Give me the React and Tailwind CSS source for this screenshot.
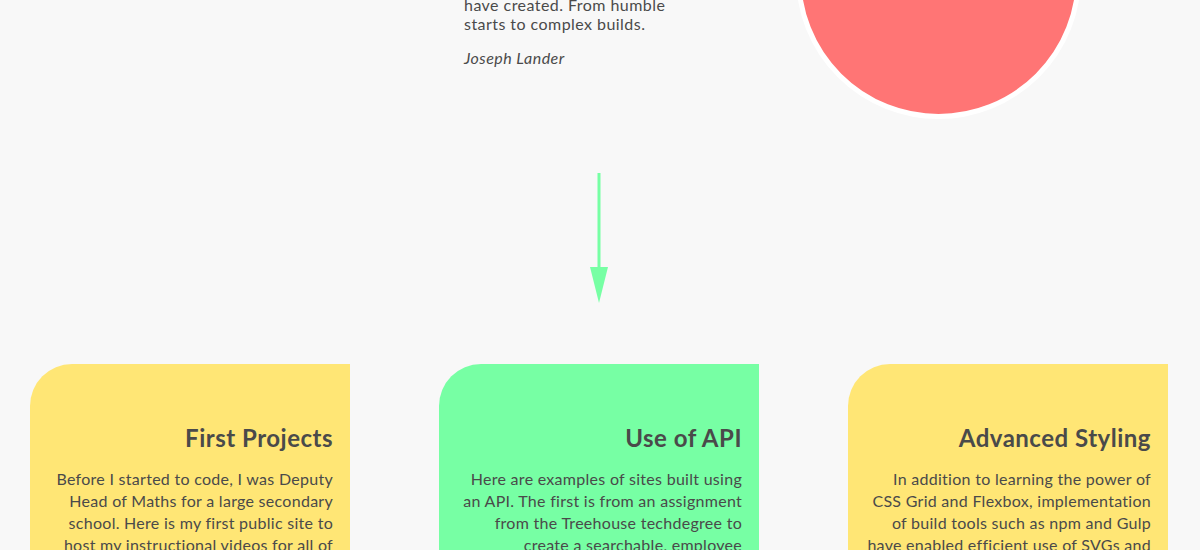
const cards = [
  {
    title: "First Projects",
    bg: "bg-[#ffe675]",
    lines: [
      "Before I started to code, I was Deputy",
      "Head of Maths for a large secondary",
      "school. Here is my first public site to",
      "host my instructional videos for all of",
      "my students.",
    ],
  },
  {
    title: "Use of API",
    bg: "bg-[#77ffa4]",
    lines: [
      "Here are examples of sites built using",
      "an API. The first is from an assignment",
      "from the Treehouse techdegree to",
      "create a searchable, employee",
      "directory.",
    ],
  },
  {
    title: "Advanced Styling",
    bg: "bg-[#ffe675]",
    lines: [
      "In addition to learning the power of",
      "CSS Grid and Flexbox, implementation",
      "of build tools such as npm and Gulp",
      "have enabled efficient use of SVGs and",
      "Sass.",
    ],
  },
];

const Card = ({ title, bg, lines }) => (
  <div className={`${bg} w-[320px] h-[320px] rounded-tl-[42px] pt-[59px] pr-[17px] pl-4 text-right`}>
    <h2 className="text-[24px] leading-[29px] font-bold tracking-[0.5px] text-[#4a4a4a]">{title}</h2>
    <p className="mt-4 text-[16px] leading-[22px] tracking-[0.28px] text-[#4a4a4a]">
      {lines.map((l) => (
        <span key={l} className="block whitespace-nowrap">
          {l}
        </span>
      ))}
    </p>
  </div>
);

export default function App() {
  return (
    <div
      className="h-[550px] w-[1200px] overflow-hidden bg-[#f8f8f8] text-[#4a4a4a]"
      style={{ fontFamily: "Lato, 'Open Sans', sans-serif" }}
    >
      {/* intro, scrolled past the top */}
      <section className="flex h-[130px] items-start overflow-hidden">
        <div className="ml-[464px] mt-[-5px] w-[220px] text-[16px] leading-[19px] tracking-[0.45px]">
          <p>
            <span className="block">have created. From humble</span>
            <span className="block">starts to complex builds.</span>
          </p>
          <p className="mt-[15px] italic">Joseph Lander</p>
        </div>
        <div className="ml-[112px] -mt-[166px] h-[285px] w-[285px] shrink-0 rounded-full border-[5px] border-white bg-[#ff7575]" />
      </section>

      {/* arrow */}
      <div className="ml-[590px] mt-[43px] h-[130px] w-[18px]">
        <svg width="18" height="130" viewBox="0 0 18 130">
          <rect x="7.5" y="0" width="3" height="98" fill="#77ffa4" />
          <polygon points="0,94 18,94 9,130" fill="#77ffa4" />
        </svg>
      </div>

      {/* cards */}
      <div className="mt-[61px] flex gap-[89px] pl-[30px]">
        {cards.map((c) => (
          <Card key={c.title} {...c} />
        ))}
      </div>
    </div>
  );
}
